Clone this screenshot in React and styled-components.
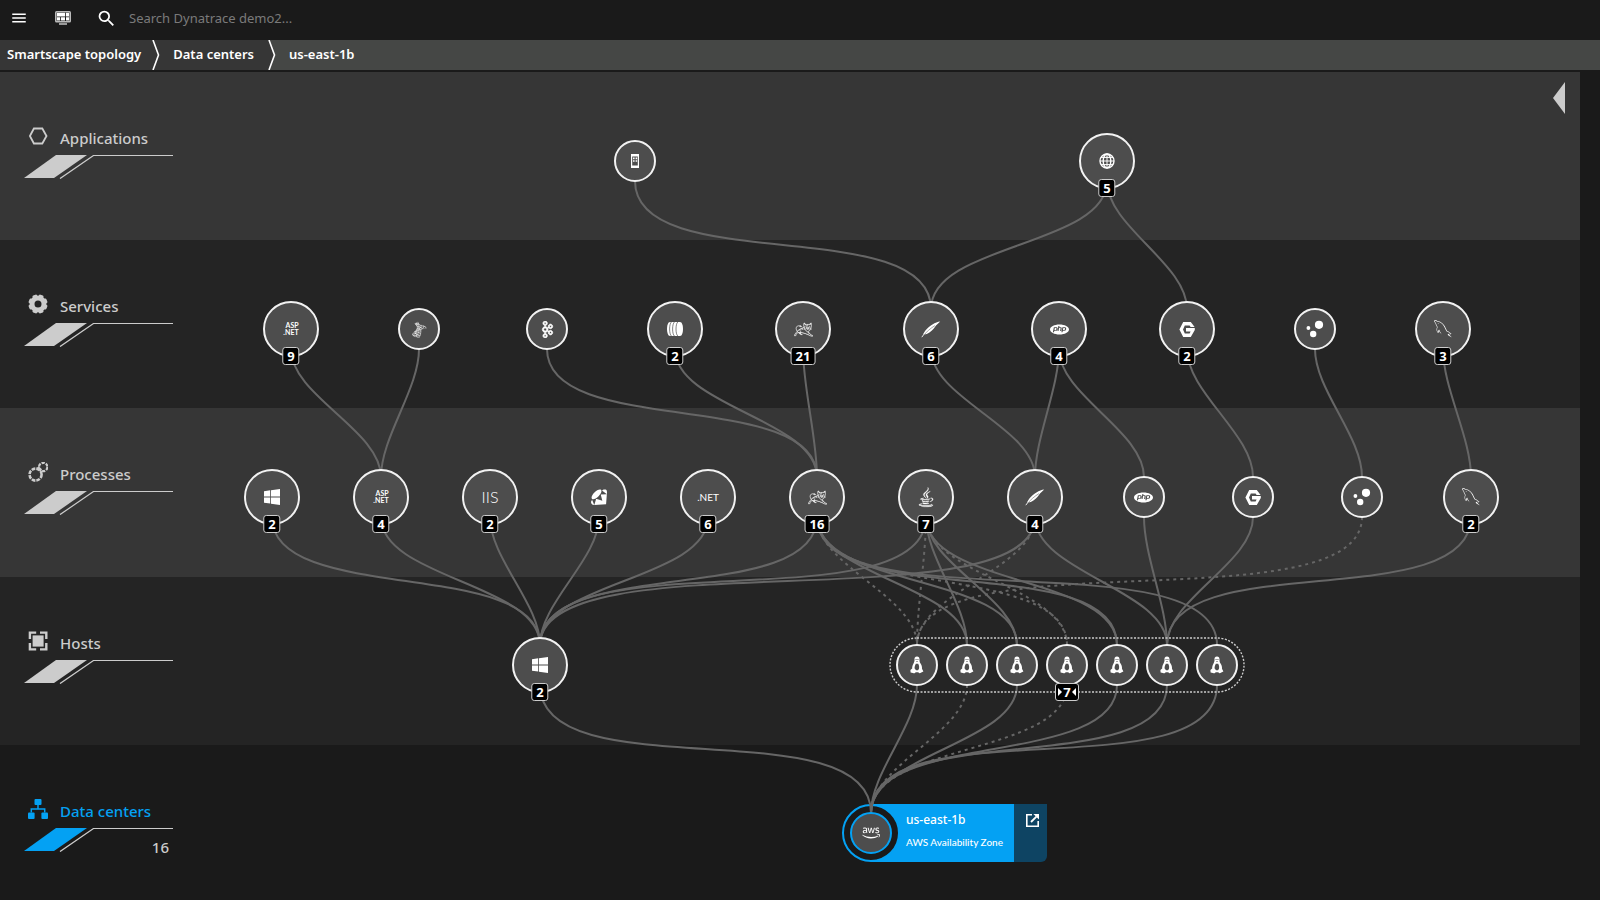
import React from "react";
import styled, { createGlobalStyle, css } from "styled-components";
import { MdMenu, MdSearch } from "react-icons/md";
import { FaAws } from "react-icons/fa";
import { SiApachetomcat, SiApachekafka, SiPhp, SiRuby } from "react-icons/si";
import { DiMsqlServer, DiJava } from "react-icons/di";
import { GrMysql } from "react-icons/gr";

const color = {
  page: "#1a1a1a",
  bandLight: "#363636",
  bandDark: "#242424",
  crumb: "#363636",
  crumbActive: "#454745",
  node: "#4d4d4d",
  link: "#666666",
  label: "#cccccc",
  blue: "#04a1f3",
  blueDark: "#0e4463",
};

const GlobalStyle = createGlobalStyle`
  *, *::before, *::after { box-sizing: border-box; }
  body {
    margin: 0;
    background: ${color.page};
    color: #fff;
    font-family: "Noto Sans", "Open Sans", sans-serif;
  }
  button, input { font: inherit; color: inherit; }
`;

const Page = styled.div`
  display: flex;
  flex-direction: column;
  min-height: 100vh;
`;

const TopBar = styled.header`
  display: flex;
  align-items: center;
  height: 40px;
  padding: 0 8px 4px;
`;

const IconButton = styled.button`
  display: flex;
  align-items: center;
  justify-content: center;
  width: 22px;
  height: 36px;
  margin-right: 22px;
  padding: 0;
  border: 0;
  background: none;
  cursor: pointer;
`;

const SearchBox = styled.label`
  display: flex;
  flex: 1;
  align-items: center;
  gap: 12px;
`;

const SearchInput = styled.input`
  flex: 1;
  height: 24px;
  padding: 0;
  border: 0;
  outline: 0;
  background: none;
  font-size: 13px;
  line-height: 24px;
  &::placeholder { color: #7a7a7a; opacity: 1; }
`;

const Breadcrumbs = styled.nav`
  display: flex;
  height: 30px;
  margin-bottom: 2px;
  background: ${color.crumbActive};
`;

const Crumb = styled.a`
  display: flex;
  align-items: center;
  padding: 0 ${(p) => (p.$first ? "11px" : "14px")} 2px ${(p) => (p.$first ? "7px" : "13px")};
  background: ${(p) => (p.$current ? color.crumbActive : color.crumb)};
  color: #fff;
  font-size: 13px;
  font-weight: 600;
  line-height: 20px;
  text-decoration: none;
`;

const Chevron = styled.svg`
  display: block;
  flex: none;
  width: 8px;
  height: 30px;
`;

const Canvas = styled.main`
  position: relative;
  display: grid;
  flex: 1;
  grid-template-rows: 168px 168px 169px 168px minmax(155px, 1fr);
  margin-right: 20px;
`;

const Band = styled.section`
  display: flex;
  align-items: flex-start;
  justify-content: space-between;
  background: ${(p) => p.$tone};
`;

const BandLabel = styled.a`
  display: flex;
  flex-direction: column;
  gap: 5px;
  width: 197px;
  padding: 54px 24px 0;
  color: ${(p) => (p.$active ? color.blue : color.label)};
  text-decoration: none;
`;

const BandTitle = styled.span`
  display: flex;
  align-items: center;
  gap: 12px;
  height: 24px;
  padding-left: 4px;
  font-size: 15px;
  font-weight: 500;
  line-height: 24px;
  svg { flex: none; margin-bottom: 4px; }
`;

const Stripe = styled.span`
  display: grid;
  > * { grid-area: 1 / 1; }
`;

const Count = styled.span`
  justify-self: end;
  padding: 7px 4px 0 0;
  color: ${color.label};
  font-size: 15px;
  font-weight: 500;
  line-height: 24px;
`;

const CollapseButton = styled.button`
  display: flex;
  margin: 10px 15px 0 0;
  padding: 0;
  border: 0;
  background: none;
  cursor: pointer;
`;

const Links = styled.svg`
  position: absolute;
  top: 0;
  left: 0;
  width: 100%;
  height: 828px;
  pointer-events: none;
  fill: none;
  stroke: ${color.link};
  stroke-width: 2;
`;

const Placed = css`
  position: absolute;
  transform: translate(-50%, -50%);
`;

const place = (p) => ({ style: { left: `${(p.$x / 1580) * 100}%`, top: `${p.$y}px` } });

const NodeButton = styled.button.attrs(place)`
  ${Placed}
  display: flex;
  align-items: center;
  justify-content: center;
  width: ${(p) => (p.$large ? 56 : 42)}px;
  height: ${(p) => (p.$large ? 56 : 42)}px;
  padding: 0;
  border: 2px solid ${(p) => (p.$selected ? color.blue : "#f2f2f2")};
  border-radius: 50%;
  background: ${color.node};
  cursor: pointer;
`;

const Badge = styled.span`
  position: absolute;
  bottom: -10px;
  left: 50%;
  display: flex;
  align-items: center;
  gap: 1px;
  height: 18px;
  padding: 0 4px;
  transform: translateX(-50%);
  border: 1px solid #ccc;
  border-radius: 3px;
  background: #000;
  color: #fff;
  font-size: 13px;
  font-weight: 700;
  line-height: 16px;
`;

const HostGroup = styled.svg.attrs(place)`
  ${Placed}
  width: ${(356 / 1580) * 100}%;
  height: 56px;
  overflow: visible;
`;

const GroupCount = styled.button.attrs(place)`
  ${Placed}
  display: flex;
  align-items: center;
  justify-content: center;
  gap: 1px;
  width: 24px;
  height: 18px;
  padding: 0;
  border: 1px solid #ccc;
  border-radius: 3px;
  background: #000;
  font-size: 13px;
  font-weight: 700;
  line-height: 16px;
  cursor: pointer;
`;

const Card = styled.article.attrs(place)`
  position: absolute;
  display: flex;
  height: 58px;
  transform: translateY(-50%);
`;

const CardBody = styled.div`
  width: 143px;
  padding: 6px 0 0 35px;
  background: ${color.blue};
`;

const CardTitle = styled.h2`
  margin: 0;
  font-size: 12px;
  font-weight: 500;
  line-height: 20px;
`;

const CardSubtitle = styled.p`
  margin: 2px 0 0;
  font-family: Lato, "Open Sans", sans-serif;
  font-size: 10px;
  font-weight: 500;
  line-height: 20px;
  white-space: nowrap;
`;

const CardAction = styled.a`
  display: flex;
  justify-content: center;
  width: 33px;
  padding: 10px 0 0 4px;
  border-radius: 0 0 6px 0;
  background: ${color.blueDark};
  color: #fff;
`;

const Ring = styled.span.attrs(place)`
  ${Placed}
  width: 58px;
  height: 58px;
  border: 2px solid ${color.blue};
  border-radius: 50%;
  background: ${color.page};
`;

const TechText = styled.span`
  font-family: Lato, "Open Sans", sans-serif;
  font-size: ${(p) => p.$size}px;
  font-weight: ${(p) => p.$weight};
  line-height: ${(p) => p.$size}px;
  text-align: right;
`;

/* ---------- icons ---------- */

const DashboardIcon = () => (
  <svg width="16" height="14" viewBox="0 0 16 14">
    <rect x="0" y="0" width="16" height="11.5" rx="1.5" fill="#bbb" />
    <rect x="1.6" y="1.4" width="12.8" height="8.6" fill="#1a1a1a" />
    <path d="M2 1.8h8.2v3.6H2zM11 1.8h3v3.6h-3zM2 6.2h3v3.4H2zM5.8 6.2H10v3.4H5.8zM11 6.2h3v3.4h-3z" fill="#fff" />
    <rect x="4" y="12" width="8" height="2" fill="#999" />
  </svg>
);

const HexagonIcon = () => (
  <svg width="20" height="18" viewBox="0 0 20 18">
    <path d="M5.9 1.5h8.4L18.5 9l-4.2 7.5H5.9L1.9 9z" fill="none" stroke="#ccc" strokeWidth="1.8" />
  </svg>
);

const GearIcon = () => (
  <svg width="20" height="20" viewBox="-10 -10 20 20">
    <circle r="6" fill="none" stroke="#ccc" strokeWidth="5" />
    {[22.5, 67.5, 112.5, 157.5, 202.5, 247.5, 292.5, 337.5].map((a) => (
      <rect key={a} x="-2.4" y="-9.6" width="4.8" height="3" rx="1.2" fill="#ccc" transform={`rotate(${a})`} />
    ))}
  </svg>
);

const ProcessIcon = () => (
  <svg width="20" height="20" viewBox="0 0 20 20" fill="none" stroke="#ccc">
    <circle cx="7.6" cy="12.6" r="6" strokeWidth="2.6" strokeDasharray="3.7 1.01" />
    <circle cx="15.2" cy="5" r="4.2" strokeWidth="2.2" strokeDasharray="3.3 1.1" />
    <path d="M9.6 5.2l3.6 3" strokeWidth="2.6" />
  </svg>
);

const HostIcon = () => (
  <svg width="20" height="20" viewBox="0 0 20 20">
    <rect x="4.6" y="4.4" width="11" height="11.2" fill="#ccc" />
    <path d="M1.9 8V1.6h6.3M12 1.6h6.3V8M18.3 12v6.4H12M8.2 18.4H1.9V12" fill="none" stroke="#ccc" strokeWidth="2.4" />
  </svg>
);

const DataCenterIcon = () => (
  <svg width="20" height="20" viewBox="0 0 20 20" fill={color.blue}>
    <rect x="6.5" y="0" width="7" height="6" rx="1" />
    <rect x="0" y="13.6" width="6.6" height="6.4" rx="1" />
    <rect x="13.4" y="13.6" width="6.6" height="6.4" rx="1" />
    <path d="M10 6v4M3.3 13.6V10h13.4v3.6" fill="none" stroke={color.blue} strokeWidth="1.5" />
  </svg>
);

const MobileIcon = () => (
  <svg width="8" height="14" viewBox="0 0 8 14">
    <rect x="0.6" y="0.6" width="6.8" height="12.8" rx="0.8" fill="none" stroke="#fff" strokeWidth="1.2" />
    <path d="M0 0h8v2.4H0zM0 11.4h8V14H0z" fill="#fff" />
    <path d="M2 3.6h1.6v1.6H2zM4.6 3.6h1.6v1.6H4.6zM2 6.2h1.6v1.6H2zM4.6 6.2h1.6v1.6H4.6z" fill="#fff" />
  </svg>
);

const GlobeIcon = () => (
  <svg width="16" height="16" viewBox="-8 -8 16 16" fill="none" stroke="#fff" strokeWidth="1.4">
    <circle r="7" />
    <ellipse rx="3.8" ry="7" />
    <path d="M0-7V7M-7 0H7M-6-3.6H6M-6 3.6H6" strokeWidth="1" />
  </svg>
);

const WindowsIcon = () => (
  <svg width="16" height="16" viewBox="0 0 16 16" fill="#fff">
    <path d="M0 2.2l6.2-.9v6.2H0zM7 1.2L16 0v7.5H7zM0 8.4h6.2v6.2L0 13.8zM7 8.4h9V16l-9-1.2z" />
  </svg>
);

const BarrelIcon = () => (
  <svg width="16" height="14" viewBox="0 0 16 14">
    <path d="M3 0h10c4 0 4 14 0 14H3C-1 14-1 0 3 0z" fill="#fff" />
    <path d="M4.4 0c-2.4 2-2.4 12 0 14M7.4 0c-2.4 2-2.4 12 0 14M10.8 0c-2.4 2-2.4 12 0 14" fill="none" stroke={color.node} strokeWidth="0.7" />
  </svg>
);

const FeatherIcon = () => (
  <svg width="20" height="18" viewBox="0 0 20 18">
    <path d="M19.2 1.4C14.4 2 8.4 5.6 4.2 10.8L2.2 14l1 .5c1.6 0 3.6-.8 5.2-2 3.4-2.5 5-4.6 6.6-7z" fill="#fff" />
    <path d="M14 5.6C10 8 5.500 11.500 1 17.2" fill="none" stroke={color.node} strokeWidth="0.5" />
    <path d="M3.6 13.4L.8 17.2" fill="none" stroke="#fff" strokeWidth="0.9" />
  </svg>
);

const GoIcon = () => (
  <svg width="16" height="15" viewBox="0 0 16 15">
    <path d="M4.2 0h7.6L15.6 5h-4L10.6 3.6H5.8L4 7.5l1.8 3.9h4.8l1-1.9H7V5.9h8.8v2L11.8 15H4.2L0.4 7.5z" fill="#fff" />
  </svg>
);

const BubblesIcon = () => (
  <svg width="18" height="18" viewBox="0 0 18 18" fill="#fff">
    <circle cx="13" cy="4.8" r="4.1" />
    <circle cx="7.2" cy="14" r="3.2" />
    <circle cx="2.4" cy="8" r="1.9" />
  </svg>
);

const PenguinIcon = () => (
  <svg width="14" height="18" viewBox="0 0 14 18">
    <path d="M7 .6C4.9.6 4.4 2 4.5 3.6c.1 2-.3 2.800-1.2 4.400-.8 1.5-1.200 2.800-1.100 4.400L.4 14l.2 2.400c1.800.1 2.800.8 4 .9l1.200-1h2.400l1.200 1c1.400-.2 2.400-1.200 4-1.800l-1.400-2.700c.2-2.200-.500-4-1.600-5.600-.8-1.200-.9-2.200-.9-3.800C9.500 1.600 8.700.6 7 .6z" fill="#fff" />
    <path d="M6 7.600C5 9.400 4.500 10.800 4.600 12.400l1.500 1.900h1.900l1-1.500c.4-2 .1-3.600-1-5.200L7 8z" fill={color.node} />
    <path d="M5.600 3h.9v1.100h-.9zM7.500 3h.9v1.100h-.9zM6 5.400h2v.7H6z" fill={color.node} />
  </svg>
);

const ExternalIcon = () => (
  <svg width="13" height="13" viewBox="0 0 13 13" fill="none" stroke="#fff" strokeWidth="1.6">
    <path d="M6 0.8H0.8v11.4h11.4V7" />
    <path d="M5 8l5.4-5.4" strokeWidth="1.8" />
    <path d="M7.4 0H13v5.6z" fill="#fff" stroke="none" />
  </svg>
);

const StripeShape = ({ fill }) => (
  <svg width="149" height="24" viewBox="0 0 149 24">
    <path d="M0 23L32 0h31L30 23z" fill={fill} />
    <path d="M36 23.6L69.500 .5H149" fill="none" stroke="#ccc" strokeWidth="1.2" />
  </svg>
);

const icons = {
  mobile: <MobileIcon />,
  globe: <GlobeIcon />,
  aspnet: <TechText $size={7} $weight={700}>ASP<br />.NET</TechText>,
  sql: <DiMsqlServer size={21} stroke="#fff" strokeWidth="0.2" />,
  kafka: <SiApachekafka size={17} stroke="#fff" strokeWidth="1" />,
  barrel: <BarrelIcon />,
  tomcat: <SiApachetomcat size={19} stroke="#fff" strokeWidth="0.3" />,
  apache: <FeatherIcon />,
  php: <SiPhp size={19} />,
  go: <GoIcon />,
  bubbles: <BubblesIcon />,
  mysql: <GrMysql size={18} />,
  windows: <WindowsIcon />,
  iis: <TechText $size={16} $weight={300}>IIS</TechText>,
  ruby: <SiRuby size={16} />,
  net: <TechText $size={10} $weight={400}>.NET</TechText>,
  java: <DiJava size={24} stroke="#fff" strokeWidth="0.5" />,
  linux: <PenguinIcon />,
  aws: <FaAws size={18} />,
};

/* ---------- data ---------- */

const layers = [
  { key: "app", title: "Applications", icon: <HexagonIcon />, tone: color.bandLight },
  { key: "service", title: "Services", icon: <GearIcon />, tone: color.bandDark },
  { key: "process", title: "Processes", icon: <ProcessIcon />, tone: color.bandLight },
  { key: "host", title: "Hosts", icon: <HostIcon />, tone: color.bandDark },
  { key: "dc", title: "Data centers", icon: <DataCenterIcon />, tone: color.page, active: true, count: 16 },
];

const rowY = [89, 257, 425, 593, 761];

const rows = [
  [
    { x: 635, icon: "mobile", name: "Mobile application" },
    { x: 1107, icon: "globe", name: "Web applications", count: 5 },
  ],
  [
    { x: 291, icon: "aspnet", name: "ASP.NET services", count: 9 },
    { x: 419, icon: "sql", name: "SQL Server service" },
    { x: 547, icon: "kafka", name: "Kafka service" },
    { x: 675, icon: "barrel", name: "Pool services", count: 2 },
    { x: 803, icon: "tomcat", name: "Tomcat services", count: 21 },
    { x: 931, icon: "apache", name: "Apache services", count: 6 },
    { x: 1059, icon: "php", name: "PHP services", count: 4 },
    { x: 1187, icon: "go", name: "Go services", count: 2 },
    { x: 1315, icon: "bubbles", name: "Service" },
    { x: 1443, icon: "mysql", name: "MySQL services", count: 3 },
  ],
  [
    { x: 272, icon: "windows", name: "Windows processes", count: 2 },
    { x: 381, icon: "aspnet", name: "ASP.NET processes", count: 4 },
    { x: 490, icon: "iis", name: "IIS processes", count: 2 },
    { x: 599, icon: "ruby", name: "Ruby processes", count: 5 },
    { x: 708, icon: "net", name: ".NET processes", count: 6 },
    { x: 817, icon: "tomcat", name: "Tomcat processes", count: 16 },
    { x: 926, icon: "java", name: "Java processes", count: 7 },
    { x: 1035, icon: "apache", name: "Apache processes", count: 4 },
    { x: 1144, icon: "php", name: "PHP process" },
    { x: 1253, icon: "go", name: "Go process" },
    { x: 1362, icon: "bubbles", name: "Process" },
    { x: 1471, icon: "mysql", name: "MySQL processes", count: 2 },
  ],
  [
    { x: 540, icon: "windows", name: "Windows hosts", count: 2 },
    ...[917, 967, 1017, 1067, 1117, 1167, 1217].map((x) => ({ x, icon: "linux", name: "Linux host" })),
  ],
  [{ x: 871, icon: "aws", name: "us-east-1b", selected: true }],
];

/* from x, to x, dashed */
const links = [
  [[635, 931], [1107, 931], [1107, 1187]],
  [
    [291, 381], [419, 381], [547, 817], [675, 817], [803, 817], [931, 1035],
    [1059, 1035], [1059, 1144], [1187, 1253], [1315, 1362], [1443, 1471],
  ],
  [
    [272, 540], [381, 540], [490, 540], [599, 540], [708, 540], [817, 540], [926, 540], [1035, 540],
    [817, 917, true], [817, 967], [817, 1017], [817, 1067, true], [817, 1117], [817, 1217],
    [926, 917, true], [926, 967], [926, 1017], [926, 1067, true], [926, 1117],
    [1035, 917, true], [1035, 1167], [1144, 1167], [1253, 1167], [1362, 917, true], [1471, 1167],
  ],
  [
    [540, 871], [917, 871], [967, 871, true], [1017, 871],
    [1067, 871, true], [1117, 871], [1167, 871], [1217, 871],
  ],
];

const linkPath = (x1, x2, row) => {
  const y1 = rowY[row] + 20;
  const y2 = rowY[row + 1] - 20;
  const bend = Math.min(0.3 * Math.hypot(x2 - x1, y2 - y1), 0.85 * (y2 - y1));
  return `M${x1} ${y1}C${x1} ${y1 + bend} ${x2} ${y2 - bend} ${x2} ${y2}`;
};

const Separator = ({ next }) => (
  <Chevron viewBox="0 0 8 30">
    <rect width="8" height="30" fill={next} />
    <path d="M0 0h1l6 15-6 15H0z" fill={color.crumb} />
    <path d="M1 0l5.500 15L1 30" fill="none" stroke="#fff" strokeWidth="1.6" />
  </Chevron>
);

export default function App() {
  return (
    <Page>
      <GlobalStyle />
      <TopBar>
        <IconButton aria-label="Menu"><MdMenu size={18} /></IconButton>
        <IconButton aria-label="Dashboards"><DashboardIcon /></IconButton>
        <SearchBox>
          <MdSearch size={21} />
          <SearchInput type="text" aria-label="Search" placeholder="Search Dynatrace demo2..." />
        </SearchBox>
      </TopBar>

      <Breadcrumbs aria-label="Breadcrumb">
        <Crumb href="#smartscape" $first>Smartscape topology</Crumb>
        <Separator next={color.crumb} />
        <Crumb href="#datacenters">Data centers</Crumb>
        <Separator next={color.crumbActive} />
        <Crumb href="#us-east-1b" $current>us-east-1b</Crumb>
      </Breadcrumbs>

      <Canvas>
        {layers.map((layer, i) => (
          <Band key={layer.key} $tone={layer.tone}>
            <BandLabel href={`#${layer.key}`} $active={layer.active}>
              <BandTitle>{layer.icon}{layer.title}</BandTitle>
              <Stripe>
                <StripeShape fill={layer.active ? color.blue : color.label} />
                {layer.count && <Count>{layer.count}</Count>}
              </Stripe>
            </BandLabel>
            {i === 0 && (
              <CollapseButton aria-label="Show details">
                <svg width="12" height="32" viewBox="0 0 12 32"><path d="M12 0v32L0 16z" fill="#ccc" /></svg>
              </CollapseButton>
            )}
          </Band>
        ))}

        <Card $x={871} $y={761}>
          <CardBody>
            <CardTitle>us-east-1b</CardTitle>
            <CardSubtitle>AWS Availability Zone</CardSubtitle>
          </CardBody>
          <CardAction href="#open" aria-label="Open us-east-1b"><ExternalIcon /></CardAction>
        </Card>
        <Ring $x={871} $y={761} />

        <Links viewBox="0 0 1580 828" preserveAspectRatio="none">
          {links.map((set, row) =>
            set.map(([from, to, dashed]) => (
              <path
                key={`${row}-${from}-${to}`}
                d={linkPath(from, to, row)}
                strokeDasharray={dashed ? "3 4" : undefined}
                vectorEffect="non-scaling-stroke"
              />
            ))
          )}
        </Links>

        <HostGroup $x={1067} $y={593} viewBox="0 0 356 56" preserveAspectRatio="none">
          <rect x="1" y="1" width="354" height="54" rx="27" fill="none" stroke="#ccc" strokeWidth="1.4" strokeDasharray="2 1.5" />
        </HostGroup>

        {rows.map((nodes, row) =>
          nodes.map((n) => (
            <NodeButton
              key={`${row}-${n.x}`}
              $x={n.x}
              $y={rowY[row]}
              $large={Boolean(n.count)}
              $selected={n.selected}
              aria-label={n.name}
            >
              {icons[n.icon]}
              {n.count && <Badge>{n.count}</Badge>}
            </NodeButton>
          ))
        )}

        <GroupCount $x={1067} $y={620} aria-label="Collapse Linux hosts">
          <svg width="4" height="8" viewBox="0 0 4 8"><path d="M0 0l4 4-4 4z" fill="#fff" /></svg>
          7
          <svg width="4" height="8" viewBox="0 0 4 8"><path d="M4 0L0 4l4 4z" fill="#fff" /></svg>
        </GroupCount>
      </Canvas>
    </Page>
  );
}
